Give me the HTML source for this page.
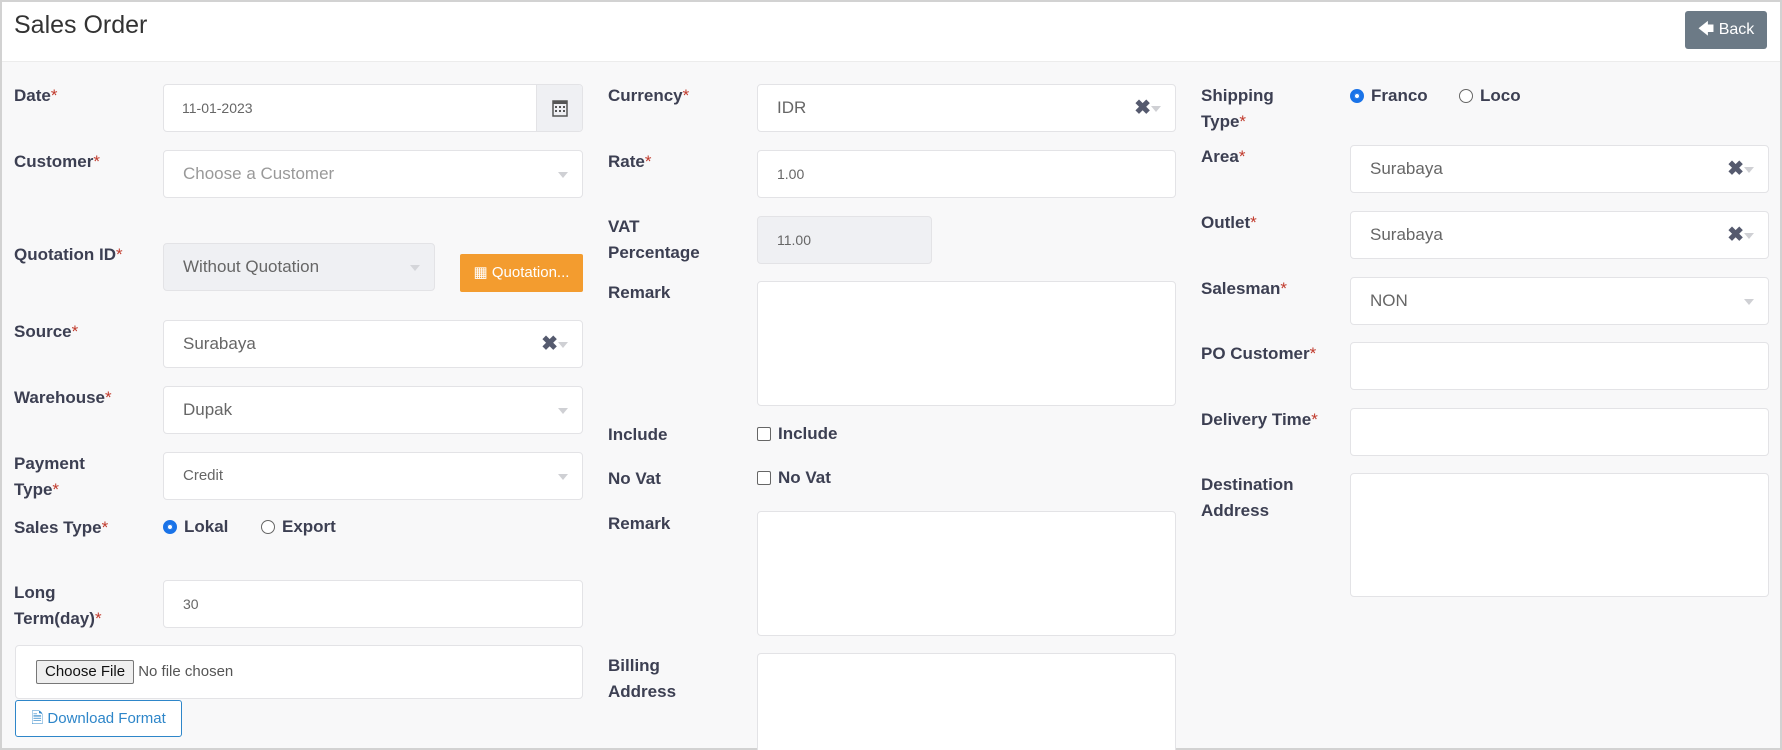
<!DOCTYPE html>
<html style="width:1782px;height:750px;overflow:hidden"><head><meta charset="utf-8"><style>
*{box-sizing:border-box;margin:0;padding:0}
body{width:1782px;height:750px;overflow:hidden;background:#f8f8f9;font-family:"Liberation Sans",sans-serif;position:relative;border:2px solid #d2d2d2}
.hdr{position:absolute;left:0;top:0;width:1778px;height:60px;background:#fff;border-bottom:1px solid #ececec}
.title{position:absolute;left:12px;top:9px;font-size:25px;color:#333}
.back{position:absolute;left:1683px;top:9px;width:82px;height:38px;background:#6c7a86;border-radius:3px;color:#fff;font-size:16px;line-height:38px;text-align:center}
.l{position:absolute;font-weight:bold;font-size:17px;color:#3c3f52;line-height:26px}
.l i{color:#c0392b;font-style:normal;font-weight:normal}
.in{position:absolute;background:#fff;border:1px solid #e3e3e6;border-radius:4px;height:48px;font-size:17px;color:#666;padding-left:19px;line-height:46px;overflow:hidden}
.sm{font-size:14px}
.dis{background:#eff0f3}
.x{position:absolute;right:24px;top:0;font-weight:bold;color:#555a6e;font-size:20px}
.car{position:absolute;right:14px;top:21px;border:5px solid transparent;border-top:6px solid #cfd0d4}
.rd{position:absolute;font-weight:bold;font-size:17px;color:#3c3f52;display:flex;align-items:center;gap:7px}
.r{width:14px;height:14px;border-radius:50%;border:1px solid #666;background:#fff}
.r.on{border:4px solid #1a73e8;box-shadow:0 0 0 1px #1a73e8 inset}
.cb{width:14px;height:14px;border:1px solid #666;border-radius:2px;background:#fff}
</style></head><body>
<div class="hdr"><div class="title">Sales Order</div><div class="back">🡄 Back</div></div>

<div class="l" style="left:12px;top:81px">Date<i>*</i></div>
<div class="in sm" style="left:161px;top:82px;width:420px;padding-left:18px">11-01-2023<div style="position:absolute;right:0;top:0;width:46px;height:46px;background:#eff0f3;border-left:1px solid #e3e3e6"><svg width="16" height="18" style="position:absolute;left:15px;top:14px" viewBox="0 0 16 18"><rect x="1" y="2" width="14" height="15" fill="none" stroke="#555" stroke-width="1.5"/><rect x="1" y="2" width="14" height="3" fill="#555"/><g fill="#555"><rect x="3" y="7" width="2" height="2"/><rect x="7" y="7" width="2" height="2"/><rect x="11" y="7" width="2" height="2"/><rect x="3" y="11" width="2" height="2"/><rect x="7" y="11" width="2" height="2"/><rect x="11" y="11" width="2" height="2"/></g></svg></div></div>

<div class="l" style="left:12px;top:147px">Customer<i>*</i></div>
<div class="in" style="left:161px;top:148px;width:420px;color:#999">Choose a Customer<span class="car"></span></div>

<div class="l" style="left:12px;top:240px">Quotation ID<i>*</i></div>
<div class="in dis" style="left:161px;top:241px;width:272px">Without Quotation<span class="car" style="border-top-color:#d4d5d9"></span></div>
<div style="position:absolute;left:458px;top:252px;width:123px;height:38px;background:#f39c2f;border-radius:2px;color:#fff;font-size:15px;line-height:38px;text-align:center">▦ Quotation...</div>

<div class="l" style="left:12px;top:317px">Source<i>*</i></div>
<div class="in" style="left:161px;top:318px;width:420px">Surabaya<span class="x">✖</span><span class="car"></span></div>

<div class="l" style="left:12px;top:383px">Warehouse<i>*</i></div>
<div class="in" style="left:161px;top:384px;width:420px">Dupak<span class="car"></span></div>

<div class="l" style="left:12px;top:449px">Payment<br>Type<i>*</i></div>
<div class="in" style="left:161px;top:450px;width:420px;font-size:15px">Credit<span class="car"></span></div>

<div class="l" style="left:12px;top:513px">Sales Type<i>*</i></div>
<div class="rd" style="left:161px;top:515px"><span class="r on"></span>Lokal</div>
<div class="rd" style="left:259px;top:515px"><span class="r"></span>Export</div>

<div class="l" style="left:12px;top:578px">Long<br>Term(day)<i>*</i></div>
<div class="in sm" style="left:161px;top:578px;width:420px">30</div>

<div class="in" style="left:13px;top:643px;width:568px;height:54px;padding-left:20px;line-height:52px;font-size:15px;color:#555"><span style="display:inline-block;border:1px solid #777;background:#efefef;color:#111;padding:0 8px;line-height:22px;border-radius:2px">Choose File</span> No file chosen</div>
<div style="position:absolute;left:13px;top:698px;width:167px;height:37px;border:1px solid #2e86c9;border-radius:3px;background:#fff;color:#2e86c9;font-size:15px;line-height:35px;text-align:center">🗎 Download Format</div>

<div class="l" style="left:606px;top:81px">Currency<i>*</i></div>
<div class="in" style="left:755px;top:82px;width:419px">IDR<span class="x">✖</span><span class="car"></span></div>
<div class="l" style="left:606px;top:147px">Rate<i>*</i></div>
<div class="in sm" style="left:755px;top:148px;width:419px">1.00</div>
<div class="l" style="left:606px;top:212px">VAT<br>Percentage</div>
<div class="in sm dis" style="left:755px;top:214px;width:175px">11.00</div>
<div class="l" style="left:606px;top:278px">Remark</div>
<div class="in" style="left:755px;top:279px;width:419px;height:125px"></div>
<div class="l" style="left:606px;top:420px">Include</div>
<div class="rd" style="left:755px;top:422px"><span class="cb"></span>Include</div>
<div class="l" style="left:606px;top:464px">No Vat</div>
<div class="rd" style="left:755px;top:466px"><span class="cb"></span>No Vat</div>
<div class="l" style="left:606px;top:509px">Remark</div>
<div class="in" style="left:755px;top:509px;width:419px;height:125px"></div>
<div class="l" style="left:606px;top:651px">Billing<br>Address</div>
<div class="in" style="left:755px;top:651px;width:419px;height:97px;border-bottom:none;border-radius:4px 4px 0 0"></div>

<div class="l" style="left:1199px;top:81px">Shipping<br>Type<i>*</i></div>
<div class="rd" style="left:1348px;top:84px"><span class="r on"></span>Franco</div>
<div class="rd" style="left:1457px;top:84px"><span class="r"></span>Loco</div>
<div class="l" style="left:1199px;top:142px">Area<i>*</i></div>
<div class="in" style="left:1348px;top:143px;width:419px">Surabaya<span class="x">✖</span><span class="car"></span></div>
<div class="l" style="left:1199px;top:208px">Outlet<i>*</i></div>
<div class="in" style="left:1348px;top:209px;width:419px">Surabaya<span class="x">✖</span><span class="car"></span></div>
<div class="l" style="left:1199px;top:274px">Salesman<i>*</i></div>
<div class="in" style="left:1348px;top:275px;width:419px">NON<span class="car"></span></div>
<div class="l" style="left:1199px;top:339px">PO Customer<i>*</i></div>
<div class="in" style="left:1348px;top:340px;width:419px"></div>
<div class="l" style="left:1199px;top:405px">Delivery Time<i>*</i></div>
<div class="in" style="left:1348px;top:406px;width:419px"></div>
<div class="l" style="left:1199px;top:470px">Destination<br>Address</div>
<div class="in" style="left:1348px;top:471px;width:419px;height:124px"></div>
</body></html>
